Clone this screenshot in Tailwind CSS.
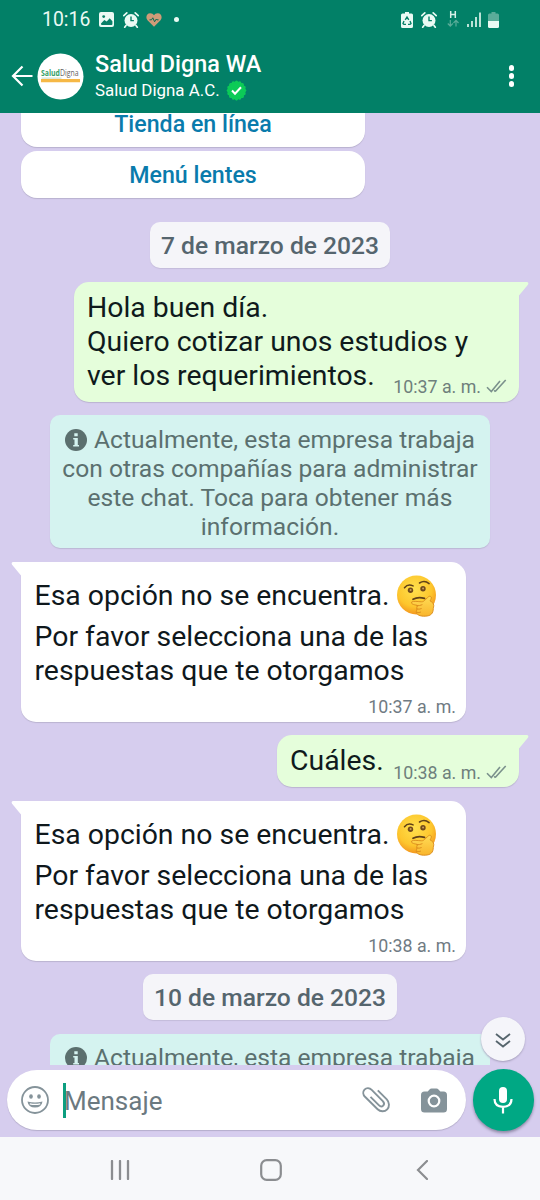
<!DOCTYPE html>
<html lang="es">
<head>
<meta charset="utf-8">
<title>Salud Digna WA</title>
<script src="https://cdn.jsdelivr.net/npm/@tailwindcss/browser@4"></script>
</head>
<body class="bg-[#d6cdee]">
<svg class="absolute size-0" aria-hidden="true">
  <defs>
    <radialGradient id="face" cx="45%" cy="35%" r="68%"><stop offset="0" stop-color="#ffe04d"/><stop offset=".65" stop-color="#fdc62d"/><stop offset="1" stop-color="#f2901d"/></radialGradient>
    <linearGradient id="hand" x1="0" y1="0" x2="0" y2="1"><stop offset="0" stop-color="#ffdc55"/><stop offset="1" stop-color="#f9b52d"/></linearGradient>
  </defs>
  <symbol id="thinking" viewBox="0 0 42 42">
    <circle cx="20.5" cy="20" r="19.5" fill="url(#face)"/>
    <path d="M8.5 12.800q3.400-4.400 8.600-1.900" fill="none" stroke="#5f4018" stroke-width="1.500" stroke-linecap="round"/>
    <path d="M23.500 8q5-3.200 9.600.6" fill="none" stroke="#5f4018" stroke-width="1.500" stroke-linecap="round"/>
    <circle cx="14.500" cy="15.300" r="2.700" fill="#71491b"/><circle cx="14.600" cy="15" r="1" fill="#c9a05a"/>
    <circle cx="27" cy="13.800" r="2.700" fill="#71491b"/><circle cx="27.100" cy="13.500" r="1" fill="#c9a05a"/>
    <path d="M17 24.300q5-2.700 11.500-.9" fill="none" stroke="#5f4018" stroke-width="1.700" stroke-linecap="round"/>
    <path d="M15.500 27.200c1.500-1.700 7-.4 9.800-.4 2 0 2.300-.5 4.500-2.500 2.500-2.300 3-3.300 4.500-3 1.800.4 1 2.900-.3 4.500 1.500.9 3.800 2.200 3.800 5 0 1-.5 1.400-.5 2.600 0 5-2.500 7.600-8 7.800-5.500.2-9-1.400-9-4.500 0-1.300 1-1.900.6-3.200-.5-1.300.6-1.900.7-3-1.800-.6-6.900-1-6.100-3.300z" fill="url(#hand)" stroke="#d98a1c" stroke-width=".9"/>
    <path d="M20.600 30.800q3.500 0 5.500-1M20.800 34q2.500.6 4.500-.3M21 37.400q2 .5 3.600-.2" fill="none" stroke="#d98a1c" stroke-width=".9" stroke-linecap="round"/>
  </symbol>
  <symbol id="checks" viewBox="0 0 21 14">
    <path d="M1 8.200l4.300 4.300L14 2M9.200 12.500L19.700 1" fill="none" stroke="#7b918c" stroke-width="1.600"/>
    <path d="M8.200 11.300l1.300 1.300" fill="none" stroke="#7b918c" stroke-width="1.600"/>
  </symbol>
  <symbol id="alarm" viewBox="0 0 16 16">
    <circle cx="8" cy="8.500" r="6.500" fill="#eafaf4"/>
    <path d="M.8 3.600L3.800.9M15.200 3.600L12.200.9M3 13.500l-1.300 1.700M13 13.500l1.300 1.700" stroke="#eafaf4" stroke-width="1.700" stroke-linecap="round"/>
    <path d="M8 4.600v4h2.900" fill="none" stroke="#078067" stroke-width="1.400"/>
  </symbol>
  <symbol id="info" viewBox="0 0 22 22">
    <circle cx="11" cy="11" r="11" fill="#5b6f6e"/>
    <path d="M9.300 4.300h3.400v3H9.300zM8.200 8.900h4.600v7h1.200v1.700H8.200v-1.700h1.300v-5.300H8.200z" fill="#d5f3f0"/>
  </symbol>
</svg>

<div class="flex h-[1200px] w-[540px] flex-col overflow-hidden bg-[#d6cdee] font-[Roboto,sans-serif]">

  <header class="h-[113px] shrink-0 bg-[#028067] text-white">
    <div class="flex h-[39px] items-center pr-[41px] pl-[42px] text-[#eafaf4]">
      <span class="text-[19.400px] leading-6">10:16</span>
      <svg class="ml-[9px] size-[15px]" viewBox="0 0 15 15"><rect width="15" height="15" rx="2" fill="#eafaf4"/><path d="M2 11.500l3.300-3.600 2.400 1.700 3-3.300 2.700 3v2.700q0 1-1 1H3q-1 0-1-1z" fill="#078067"/><circle cx="4.700" cy="4.600" r="1.400" fill="#078067"/></svg>
      <svg class="ml-[9px] size-4"><use href="#alarm"/></svg>
      <svg class="ml-[7px] h-[14px] w-4" viewBox="0 0 16 14"><path d="M8 13.800L1.500 7.300C-.7 4.700.4.400 4.200.300 6 .300 7.200 1.200 8 2.300 8.800 1.200 10 .300 11.800.300c3.800.1 4.900 4.400 2.700 7z" fill="#cf9b78"/><path d="M3.500 6.800h2l1.300-2 1.800 4 1.500-2.600.8.600H12.500" fill="none" stroke="#0c6a55" stroke-width="1"/></svg>
      <span class="ml-[12px] size-[5px] rounded-full bg-[#eafaf4]"></span>
      <div class="ml-auto flex items-center">
        <svg class="h-4 w-3" viewBox="0 0 12 16"><path d="M4 0h4v1.500h2.500Q12 1.500 12 3v11.500q0 1.500-1.500 1.500h-9Q0 16 0 14.500V3q0-1.500 1.500-1.500H4z" fill="#eafaf4"/><path d="M4.200 7.800L6 5l1.800 2.800M9 9l1 2.500-1 .9H7M5 12.400H2.900L2 11.500 3 9" fill="none" stroke="#078067" stroke-width="1.400"/></svg>
        <svg class="ml-[8px] size-[16px]"><use href="#alarm"/></svg>
        <svg class="ml-[10px] h-[17px] w-[12px]" viewBox="0 0 12 17"><path d="M3.700 0v7M8.300 0v7M3.700 3.500h4.600" stroke="#d8efe8" stroke-width="1.500" fill="none"/><path d="M3.300 9v6M.8 12.500l2.500 2.700 2.500-2.700M9 15.500v-6M6.500 12L9 9.300l2.500 2.700" stroke="#5aac99" stroke-width="1.200" fill="none"/></svg>
        <svg class="ml-[8px] h-[15px] w-[14px]" viewBox="0 0 14 15"><path d="M1 12v3M5 9v6M9 5v10M13 .5v14.500" stroke="#eafaf4" stroke-width="1.600"/></svg>
        <svg class="ml-[7px] h-4 w-[11px]" viewBox="0 0 11 16"><path d="M3.500 0h4v1.500h2Q11 1.500 11 3v6H0V3q0-1.500 1.500-1.500h2z" fill="#5aac99"/><path d="M0 9h11v5.500q0 1.500-1.500 1.500h-8Q0 16 0 14.500z" fill="#eafaf4"/></svg>
      </div>
    </div>
    <div class="flex h-[74px] items-center pr-[26px] pl-[11px]">
      <svg class="h-[22px] w-[22px]" viewBox="0 0 22 22"><path d="M21.500 11H2M11.500 1.500L2 11l9.500 9.500" fill="none" stroke="#fff" stroke-width="2.200"/></svg>
      <svg class="ml-[4px] size-[47px]" viewBox="0 0 47 47">
        <circle cx="23.500" cy="23.500" r="23" fill="#fff"/>
        <text x="4" y="23.400" textLength="37.500" lengthAdjust="spacingAndGlyphs" font-family="Open Sans, sans-serif" font-size="8.800" fill="#5f5f5f"><tspan font-weight="700" fill="#36a168">Salud</tspan>Digna</text>
        <path d="M4.500 25.100h20" stroke="#a9cbb2" stroke-width=".7"/>
        <path d="M4 27.600h39" stroke="#f6b846" stroke-width="3.400"/>
      </svg>
      <div class="ml-[11px] flex flex-col">
        <span class="text-[23.400px] leading-[26px] font-medium">Salud Digna WA</span>
        <span class="flex items-center gap-[6px] pt-[2px] text-[16.900px] leading-[22px]">Salud Digna A.C.
          <svg class="size-[21px]" viewBox="-10.500 -10.500 21 21"><g fill="#0ccb57"><rect x="-7.400" y="-7.400" width="14.800" height="14.800" rx="1.500"/><rect x="-7.400" y="-7.400" width="14.800" height="14.800" rx="1.500" transform="rotate(22.500)"/><rect x="-7.400" y="-7.400" width="14.800" height="14.800" rx="1.500" transform="rotate(45)"/><rect x="-7.400" y="-7.400" width="14.800" height="14.800" rx="1.500" transform="rotate(67.500)"/></g><path d="M-4.500 0l3 3.200L4.500-3.200" fill="none" stroke="#fff" stroke-width="2"/></svg>
        </span>
      </div>
      <div class="ml-auto flex flex-col gap-[2.500px]"><i class="size-[5.500px] rounded-full bg-white"></i><i class="size-[5.500px] rounded-full bg-white"></i><i class="size-[5.500px] rounded-full bg-white"></i></div>
    </div>
  </header>

  <main class="flex h-[952px] shrink-0 flex-col overflow-hidden">
    <div class="ml-[21px] flex h-[34px] w-[344px] shrink-0 justify-center rounded-b-[16px] bg-white text-[23.200px] leading-[23px] font-medium text-[#0a7bac] shadow-[0_1px_1px_#b9b2cf]">Tienda en línea</div>
    <div class="mt-[4px] ml-[21px] flex h-[47px] w-[344px] shrink-0 items-center justify-center rounded-[16px] bg-white text-[23.200px] leading-[48px] font-medium text-[#0a7bac] shadow-[0_1px_1px_#b9b2cf]">Menú lentes</div>

    <div class="mt-[24px] flex h-[46px] w-[240px] shrink-0 justify-center self-center rounded-[10px] bg-[#f5f5f9] pt-[9px] text-[24.600px] leading-[30px] font-medium text-[#55656e] shadow-[0_1px_1px_#c4bcda]">7 de marzo de 2023</div>

    <div class="relative mt-[14px] mr-[21px] flex h-[120px] w-[445px] shrink-0 self-end rounded-[15px] rounded-tr-none bg-[#e5fedb] pt-[9px] pl-[13px] shadow-[0_1px_1px_#bbb4d0]">
      <svg class="absolute top-0 left-full h-[14px] w-[10px]" viewBox="0 0 10 14"><path d="M-1 0H8q2.200.4.900 2.800L0 13.500h-1z" fill="#e5fedb"/></svg>
      <p class="text-[28.400px] leading-[34px] whitespace-nowrap text-[#0f1a1c]">Hola buen día.<br>Quiero cotizar unos estudios y<br>ver los requerimientos.</p>
      <span class="absolute right-[12px] bottom-[4px] flex items-center gap-[5px] text-[17.800px] leading-[22px] text-[#6e807c]">10:37 a. m.<svg class="mb-[3px] h-[14px] w-[21px]"><use href="#checks"/></svg></span>
    </div>

    <div class="mt-[13px] h-[133px] w-[440px] shrink-0 self-center rounded-[10px] bg-[#d5f3f0] pt-[10px] text-center text-[24.600px] leading-[29px] whitespace-nowrap text-[#5b706f] shadow-[0_1px_1px_#bbb9d4]"><svg class="mr-[7px] mb-[3px] inline size-[22px] align-middle"><use href="#info"/></svg>Actualmente, esta empresa trabaja<br>con otras compañías para administrar<br>este chat. Toca para obtener más<br>información.</div>

    <div class="relative mt-[14px] ml-[21px] h-[160px] w-[445px] shrink-0 rounded-[15px] rounded-tl-none bg-white pt-[13px] pl-[13.500px] shadow-[0_1px_1px_#bbb4d0]">
      <svg class="absolute top-0 right-full h-[14px] w-[10px]" viewBox="0 0 10 14"><path d="M11 0H2Q-.2.400 1.100 2.800L10 13.500h1z" fill="#fff"/></svg>
      <div class="flex h-[45px] items-start text-[28.400px] leading-[42px] whitespace-nowrap text-[#0f181c]">Esa opción no se encuentra.<svg class="ml-[6px] size-[42px]"><use href="#thinking"/></svg></div>
      <p class="text-[28.400px] leading-[34px] whitespace-nowrap text-[#0f181c]">Por favor selecciona una de las<br>respuestas que te otorgamos</p>
      <span class="absolute right-[10px] bottom-[4px] text-[17.800px] leading-[22px] text-[#707b83]">10:37 a. m.</span>
    </div>

    <div class="relative mt-[13px] mr-[21px] h-[52px] w-[242px] shrink-0 self-end rounded-[15px] rounded-tr-none bg-[#e5fedb] pt-[9px] pl-[13px] shadow-[0_1px_1px_#bbb4d0]">
      <svg class="absolute top-0 left-full h-[14px] w-[10px]" viewBox="0 0 10 14"><path d="M-1 0H8q2.200.4.900 2.800L0 13.500h-1z" fill="#e5fedb"/></svg>
      <p class="text-[28.400px] leading-[34px] text-[#0f1a1c]">Cuáles.</p>
      <span class="absolute right-[12px] bottom-[3px] flex items-center gap-[5px] text-[17.800px] leading-[22px] text-[#6e807c]">10:38 a. m.<svg class="mb-[3px] h-[14px] w-[21px]"><use href="#checks"/></svg></span>
    </div>

    <div class="relative mt-[14px] ml-[21px] h-[160px] w-[445px] shrink-0 rounded-[15px] rounded-tl-none bg-white pt-[13px] pl-[13.500px] shadow-[0_1px_1px_#bbb4d0]">
      <svg class="absolute top-0 right-full h-[14px] w-[10px]" viewBox="0 0 10 14"><path d="M11 0H2Q-.2.400 1.100 2.800L10 13.500h1z" fill="#fff"/></svg>
      <div class="flex h-[45px] items-start text-[28.400px] leading-[42px] whitespace-nowrap text-[#0f181c]">Esa opción no se encuentra.<svg class="ml-[6px] size-[42px]"><use href="#thinking"/></svg></div>
      <p class="text-[28.400px] leading-[34px] whitespace-nowrap text-[#0f181c]">Por favor selecciona una de las<br>respuestas que te otorgamos</p>
      <span class="absolute right-[10px] bottom-[4px] text-[17.800px] leading-[22px] text-[#707b83]">10:38 a. m.</span>
    </div>

    <div class="mt-[13px] flex h-[46px] w-[254px] shrink-0 justify-center self-center rounded-[10px] bg-[#f5f5f9] pt-[9px] text-[24.600px] leading-[30px] font-medium text-[#55656e] shadow-[0_1px_1px_#c4bcda]">10 de marzo de 2023</div>

    <div class="mt-[14px] h-[60px] w-[440px] shrink-0 self-center rounded-[10px] bg-[#d5f3f0] pt-[9px] text-center text-[24.600px] leading-[29px] whitespace-nowrap text-[#5b706f]"><svg class="mr-[7px] mb-[3px] inline size-[22px] align-middle"><use href="#info"/></svg>Actualmente, esta empresa trabaja</div>
  </main>

  <div class="relative flex h-[72px] shrink-0 items-start pt-[5px] pl-[7px]">
    <button class="absolute top-[-48px] left-[481px] flex size-[44px] items-center justify-center rounded-full bg-[#f5f5fa] shadow-[0_1px_2px_#a59fbb]">
      <svg class="mt-[3px] h-[15px] w-4" viewBox="0 0 16 15"><path d="M1 1l7 5.500L15 1M1 8l7 5.500L15 8" fill="none" stroke="#56656d" stroke-width="1.800"/></svg>
    </button>
    <div class="flex h-[60px] w-[459px] items-center rounded-full bg-white pl-[14px] shadow-[0_1px_1px_#b5aecb]">
      <svg class="size-7" viewBox="0 0 28 28"><circle cx="14" cy="14" r="13" fill="none" stroke="#85939a" stroke-width="1.800"/><ellipse cx="10" cy="10.500" rx="1.800" ry="2.300" fill="#85939a"/><ellipse cx="18" cy="10.500" rx="1.800" ry="2.300" fill="#85939a"/><path d="M6.500 15.500q7.500 2.200 15 0-.8 6-7.500 6t-7.500-6z" fill="#85939a"/><path d="M8.800 17.800q5.200 1.200 10.400 0" stroke="#fff" stroke-width="1.300" fill="none"/></svg>
      <span class="ml-[14px] h-[35px] w-[3px] bg-[#0c9f80]"></span>
      <span class="-ml-[2px] pt-[2px] text-[26px] leading-[31px] text-[#6b7980]">Mensaje</span>
      <svg class="ml-auto h-[26px] w-[28px]" viewBox="0 0 28 26"><path d="M15.800 3.300L24.800 12.300c2.800 3 2.800 7.600.4 10.100-2.600 2.600-6.800 2.500-9.600-.2L3 9.800C.9 7.600.7 4.500 2.500 2.600 4.500.600 7.600.800 9.700 2.900L20.800 14.200c1.400 1.500 1.500 3.300.4 4.400-1.200 1.200-3 1-4.400-.4L8.500 9.800" fill="none" stroke="#85939a" stroke-width="1.900"/></svg>
      <svg class="mr-[19px] ml-[31px] h-[25px] w-[26px]" viewBox="0 0 26 25"><path d="M8.500 1.500Q9.300.500 10.500.500h5q1.200 0 2 1L19.300 3.500H22.500Q26 3.500 26 7v14q0 3.500-3.500 3.500h-19Q0 24.500 0 21V7q0-3.500 3.500-3.500h3.200z" fill="#85939a"/><circle cx="13" cy="13" r="5.300" fill="#85939a" stroke="#fff" stroke-width="2.200"/></svg>
    </div>
    <button class="-mt-px ml-[6.500px] flex size-[61.500px] items-center justify-center rounded-full bg-[#00a884] shadow-[0_2px_3px_#8f89a6]">
      <svg class="h-[28px] w-[20px]" viewBox="0 0 20 28"><rect x="6" y="1" width="8" height="16" rx="4" fill="#fff"/><path d="M1.500 13q0 7.500 8.500 7.800 8.500-.3 8.500-7.800M10 20.500v7" fill="none" stroke="#fff" stroke-width="2.200"/></svg>
    </button>
  </div>

  <nav class="flex h-[63px] shrink-0 items-center bg-[#f7f8fa] pt-[2px] pl-[110px]">
    <svg class="h-5 w-5" viewBox="0 0 20 20"><path d="M2 1v18M10 1v18M18 1v18" stroke="#8b8d90" stroke-width="2.300" stroke-linecap="round"/></svg>
    <svg class="ml-[130px] h-[22px] w-[22px]" viewBox="0 0 22 22"><rect x="1.200" y="1.200" width="19.600" height="19.600" rx="5.500" fill="none" stroke="#8b8d90" stroke-width="2.200"/></svg>
    <svg class="ml-[134px] h-5 w-3" viewBox="0 0 12 20"><path d="M11 1L2 10l9 9" fill="none" stroke="#8b8d90" stroke-width="2.200" stroke-linecap="round"/></svg>
  </nav>
</div>
</body>
</html>
